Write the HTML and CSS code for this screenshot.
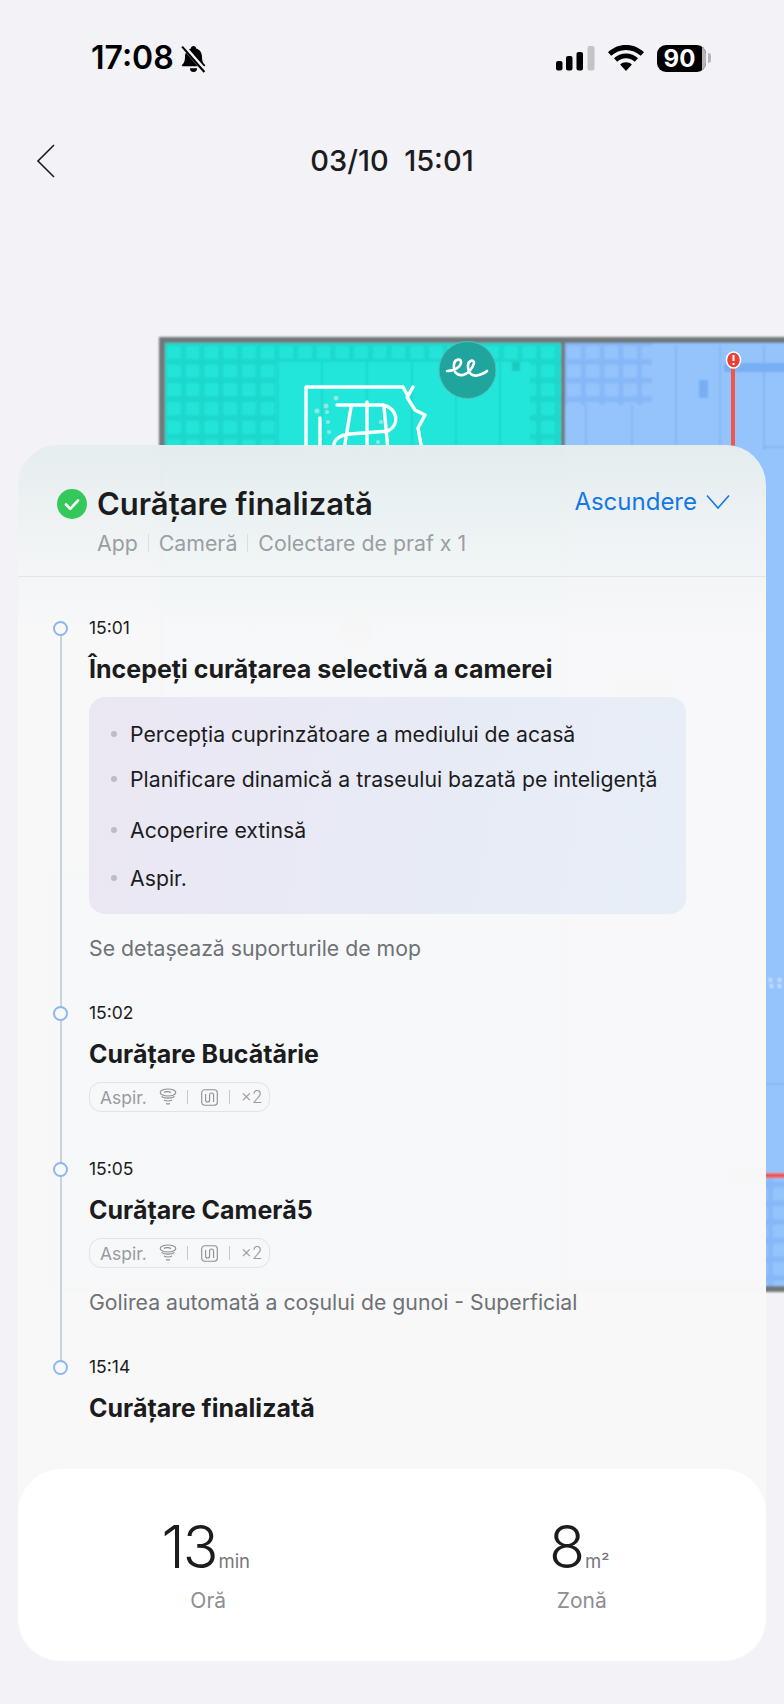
FILE: index.html
```html
<!DOCTYPE html>
<html lang="ro">
<head>
<meta charset="utf-8">
<title>Curățare finalizată</title>
<link rel="stylesheet" href="styles.css">
</head>
<body>
<svg class="map" width="784" height="1704" viewBox="0 0 784 1704" aria-hidden="true">
  <defs>
    <pattern id="cg" x="165" y="343" width="18.7" height="18.7" patternUnits="userSpaceOnUse">
      <rect width="18.7" height="18.7" fill="#1dd8cc"/>
      <rect x="2" y="3" width="14" height="13" rx="1.500" fill="#21e4d8"/>
    </pattern>
    <pattern id="bg" x="565" y="343" width="18.7" height="18.7" patternUnits="userSpaceOnUse">
      <rect width="18.7" height="18.7" fill="#86b8f8"/>
      <rect x="2" y="3" width="14" height="13" rx="1.500" fill="#95c3fc"/>
    </pattern>
    <filter id="soft"><feGaussianBlur stdDeviation="1.300"/></filter>
  </defs>
  <g filter="url(#soft)">
    <rect x="159" y="337" width="640" height="955" fill="#6f7878"/>
    <rect x="50" y="870" width="520" height="422" fill="#6f7878"/>
    <rect x="165" y="343" width="396" height="600" fill="#21e6da"/>
    <rect x="56" y="876" width="505" height="410" fill="#21e6da"/>
    <rect x="565" y="343" width="225" height="943" fill="#95c4fd"/>
    <rect x="165" y="343" width="111" height="110" fill="url(#cg)"/>
    <rect x="276" y="343" width="254" height="19" fill="url(#cg)"/>
    <rect x="530" y="343" width="31" height="110" fill="url(#cg)"/>
    <rect x="565" y="343" width="87" height="62" fill="url(#bg)"/>
    <rect x="565" y="1178" width="225" height="108" fill="url(#bg)"/>
    <path d="M278 362V450M322 362V450M367 362V450M412 362V450M456 362V450M500 362V450" stroke="#1bd2c6" stroke-width="1.500"/>
    <path d="M586 405V450M632 405V450M676 345V450M720 345V450M764 345V450M764 447H790M764 1084H790" stroke="#7fb0ee" stroke-width="1.500" fill="none"/>
    <rect x="724" y="363" width="66" height="9" fill="#78aef2"/>
    <rect x="699" y="380" width="9" height="18" fill="#78aef2"/>
    <rect x="512" y="362" width="8" height="9" fill="#1ac9be"/>
    <rect x="730" y="1173" width="60" height="5" fill="#f0574a"/>
    <path d="M769 980h3M778 980h3M770 986h3M778 986h3" stroke="#d8e9ff" stroke-width="3"/>
    <rect x="615" y="680" width="55" height="40" rx="4" fill="#f5a623"/>
    <circle cx="358" cy="632" r="17" fill="#4a4a4a"/>
  </g>
  <path d="M733 362V450" stroke="#f0574a" stroke-width="4"/>
  <ellipse cx="733.500" cy="360" rx="7" ry="8" fill="#e8413a" stroke="#fff" stroke-width="1.500"/>
  <path d="M733.500 355v6M733.500 363v2" stroke="#fff" stroke-width="2"/>
  <circle cx="467.500" cy="370" r="28.500" fill="#1fa59d" stroke="#56bdb7" stroke-width="1"/>
  <path d="M447 371c7 0 14-4 14-9 0-4-6-3-7 2-1 8 3 12 9 11 5-1 10-7 11-12 0-4-6-3-6 3 0 8 5 11 11 9 3-1 6-2 8-4" fill="none" stroke="#fff" stroke-width="2.600" stroke-linecap="round"/>
  <g fill="none" stroke="#fff" stroke-width="3.400" stroke-linecap="round" stroke-linejoin="round">
    <path d="M306 450V387H403L408 396 413 387 407 397 415 410 425 415 418 428 422 450"/>
    <path d="M320 418V450M337 405H383C398 408 400 425 388 431L350 434C338 435 332 441 334 450M351 407 344 450M367 402V450M384 407 388 450"/>
  </g>
  <g fill="#8fe9e3">
    <circle cx="317" cy="411" r="2.500"/><circle cx="326" cy="406" r="2.500"/><circle cx="336" cy="398" r="2.500"/><circle cx="327" cy="412" r="2"/><circle cx="328" cy="422" r="2"/><circle cx="329" cy="432" r="2"/><circle cx="381" cy="422" r="2"/><circle cx="378" cy="442" r="2"/>
  </g>
</svg>

<div class="screen">
  <header class="status">
    <div class="status-left">
      <span class="clock">17:08</span>
      <svg class="bell" width="29" height="29" viewBox="0 0 28 28" aria-hidden="true">
        <path d="M14 2c1.500 0 2.500 1 2.500 2.300 3.700 1.100 5.700 4.200 5.700 8.200 0 4 1 5.800 2.800 7.500.6.600.2 1.600-.7 1.600H3.700c-.9 0-1.300-1-.7-1.600 1.800-1.700 2.800-3.500 2.800-7.500 0-4 2-7.100 5.700-8.200C11.500 3 12.500 2 14 2Z"/>
        <path d="M10.500 23.500h7a3.500 3.500 0 0 1-7 0Z"/>
        <path d="M4 2 25 26" stroke="#f2f2f7" stroke-width="4.500"/>
        <path d="M3 2.500 24.500 27" stroke="#000" stroke-width="2"/>
      </svg>
    </div>
    <div class="status-right">
      <svg width="39" height="25" viewBox="0 0 39 25" aria-hidden="true">
        <rect x="0" y="15" width="6.500" height="9.500" rx="2"/>
        <rect x="10" y="10" width="6.500" height="14.500" rx="2"/>
        <rect x="20.500" y="6" width="6.500" height="18.500" rx="2"/>
        <rect x="31.500" y="0" width="7" height="24.500" rx="2" fill="#c4c4c6"/>
      </svg>
      <svg width="36" height="26" viewBox="0 0 36 26" aria-hidden="true">
        <path d="M18 0C11 0 5 2.600 0 7.200l3.200 3.600C7.300 7 12.300 4.900 18 4.900s10.700 2.100 14.800 5.900L36 7.200C31 2.600 25 0 18 0Z"/>
        <path d="M18 8.500c-4.700 0-8.800 1.700-12 4.700l3.200 3.600c2.400-2.200 5.400-3.500 8.800-3.500s6.400 1.300 8.800 3.500l3.200-3.600c-3.200-3-7.300-4.700-12-4.700Z"/>
        <path d="M18 17.200c-2.300 0-4.300.8-5.900 2.200L18 26l5.900-6.600c-1.600-1.400-3.600-2.200-5.900-2.200Z"/>
      </svg>
      <div class="battery"><span class="battery-fill">90</span><i class="battery-end"></i></div>
      <i class="battery-knob"></i>
    </div>
  </header>

  <nav class="nav">
    <svg class="back" width="20" height="34" viewBox="0 0 20 34" aria-hidden="true"><path d="M18 1 2 17l16 16" fill="none" stroke="#1c1c1e" stroke-width="1.600"/></svg>
    <h1 class="nav-title">03/10&nbsp; 15:01</h1>
  </nav>

  <section class="sheet">
    <div class="sheet-head">
      <div class="head-main">
        <div class="head-title">
          <svg class="check" width="30" height="30" viewBox="0 0 30 30" aria-hidden="true"><circle cx="15" cy="15" r="15" fill="#34c759"/><path d="M9 15.500l4.300 4.300L21 11.500" fill="none" stroke="#fff" stroke-width="2.600" stroke-linecap="round" stroke-linejoin="round"/></svg>
          <span>Curățare finalizată</span>
        </div>
        <div class="head-sub"><span>App</span><i></i><span>Cameră</span><i></i><span>Colectare de praf x 1</span></div>
      </div>
      <div class="hide">
        <span>Ascundere</span>
        <svg width="24" height="16" viewBox="0 0 24 16" aria-hidden="true"><path d="M1 1.500 12 14 23 1.500" fill="none" stroke="#1677e6" stroke-width="1.600"/></svg>
      </div>
    </div>

    <div class="timeline">
      <i class="rail"></i>

      <article class="event">
        <i class="dot"></i>
        <time class="time">15:01</time>
        <h2 class="event-title">Începeți curățarea selectivă a camerei</h2>
        <ul class="steps">
          <li>Percepția cuprinzătoare a mediului de acasă</li>
          <li>Planificare dinamică a traseului bazată pe inteligență</li>
          <li>Acoperire extinsă</li>
          <li>Aspir.</li>
        </ul>
        <p class="note">Se detașează suporturile de mop</p>
      </article>

      <article class="event">
        <i class="dot"></i>
        <time class="time">15:02</time>
        <h2 class="event-title">Curățare Bucătărie</h2>
        <div class="chip">
          <span>Aspir.</span>
          <svg class="chip-fan" width="18" height="18" viewBox="0 0 18 18" aria-hidden="true"><ellipse cx="9" cy="4.500" rx="7.800" ry="3.500"/><path d="M5 4.500c1-1 5-1.300 7 0M2.500 8.500c3 2.200 10 2.200 13 0M5 12c2 1.300 6 1.300 8 0M7 15.500c1.200.6 2.800.6 4 0"/></svg>
          <i class="sep"></i>
          <svg class="chip-mop" width="17" height="17" viewBox="0 0 17 17" aria-hidden="true"><rect x=".7" y=".7" width="15.600" height="15.600" rx="3"/><path d="M4.600 5v6a2 2 0 0 0 4 0V6a2 2 0 0 1 4 0v7"/></svg>
          <i class="sep"></i>
          <span class="chip-count">×2</span>
        </div>
      </article>

      <article class="event">
        <i class="dot"></i>
        <time class="time">15:05</time>
        <h2 class="event-title">Curățare Cameră5</h2>
        <div class="chip">
          <span>Aspir.</span>
          <svg class="chip-fan" width="18" height="18" viewBox="0 0 18 18" aria-hidden="true"><ellipse cx="9" cy="4.500" rx="7.800" ry="3.500"/><path d="M5 4.500c1-1 5-1.300 7 0M2.500 8.500c3 2.200 10 2.200 13 0M5 12c2 1.300 6 1.300 8 0M7 15.500c1.200.6 2.800.6 4 0"/></svg>
          <i class="sep"></i>
          <svg class="chip-mop" width="17" height="17" viewBox="0 0 17 17" aria-hidden="true"><rect x=".7" y=".7" width="15.600" height="15.600" rx="3"/><path d="M4.600 5v6a2 2 0 0 0 4 0V6a2 2 0 0 1 4 0v7"/></svg>
          <i class="sep"></i>
          <span class="chip-count">×2</span>
        </div>
        <p class="note">Golirea automată a coșului de gunoi - Superficial</p>
      </article>

      <article class="event">
        <i class="dot"></i>
        <time class="time">15:14</time>
        <h2 class="event-title">Curățare finalizată</h2>
      </article>
    </div>

    <div class="stats">
      <div class="stat">
        <div class="stat-value"><b>13</b><span>min</span></div>
        <div class="stat-label">Oră</div>
      </div>
      <div class="stat">
        <div class="stat-value"><b>8</b><span>m²</span></div>
        <div class="stat-label">Zonă</div>
      </div>
    </div>
  </section>
</div>
</body>
</html>
```
FILE: styles.css
```css
* { box-sizing: border-box; }
html, body { margin: 0; padding: 0; }
body {
  width: 784px;
  height: 1704px;
  overflow: hidden;
  position: relative;
  background: #f2f2f7;
  font-family: Inter, "Noto Sans", "Liberation Sans", sans-serif;
  color: #1c1c1e;
}
i { display: block; font-style: normal; }

.map { position: absolute; left: 0; top: 0; }
.screen { position: relative; width: 784px; }

/* status bar */
.status {
  height: 116px;
  padding: 44px 73px 0 91px;
  display: flex;
  justify-content: space-between;
  align-items: flex-start;
}
.status-left { display: flex; align-items: center; gap: 5px; height: 28px; }
.clock { font-size: 32px; line-height: 28px; font-weight: 600; color: #000; }
.bell { fill: #000; margin-top: 1px; }
.status-right { display: flex; align-items: center; height: 28px; gap: 13px; }
.status-right svg { fill: #000; }
.battery {
  width: 49px;
  height: 27px;
  border-radius: 9px;
  background: #000;
  display: flex;
  overflow: hidden;
}
.battery-fill {
  flex: 1;
  color: #fff;
  font-size: 24px;
  font-weight: 700;
  line-height: 27px;
  text-align: center;
}
.battery-end { width: 4px; background: #b6b6b8; }
.battery-knob { width: 3px; height: 10px; margin-left: -11px; border-radius: 0 3px 3px 0; background: #b6b6b8; }

/* nav */
.nav { height: 92px; padding-bottom: 2px; position: relative; display: flex; align-items: center; justify-content: center; }
.back { position: absolute; left: 36px; top: 28px; }
.nav-title { margin: 0; font-size: 29px; line-height: 34px; font-weight: 500; color: #1c1c1e; }

/* sheet */
.sheet {
  margin: 237px 18px 0;
  width: 748px;
  height: 1216px;
  border-radius: 40px;
  background: linear-gradient(180deg, rgba(229,237,238,.99) 0, rgba(241,244,245,.99) 100px, rgba(248,248,249,.992) 190px);
  display: flex;
  flex-direction: column;
}
.sheet-head {
  height: 132px;
  padding: 39px 36px 0 39px;
  display: flex;
  justify-content: space-between;
  align-items: flex-start;
  border-bottom: 1px solid #e2e5e7;
  flex: none;
}
.head-title { display: flex; align-items: center; gap: 10px; font-size: 31px; line-height: 40px; font-weight: 600; color: #1c1c1e; }
.check { flex: none; }
.head-sub { display: flex; align-items: center; gap: 10px; margin-left: 40px; margin-top: -1px; font-size: 21.300px; line-height: 40px; color: #9a9ea3; }
.head-sub i { width: 1px; height: 18px; background: #dcdfe1; }
.hide { display: flex; align-items: center; gap: 9px; font-size: 24px; line-height: 36px; color: #1677e6; }

/* timeline */
.timeline { position: relative; flex: 1; padding: 39px 0 0 71px; }
.rail { position: absolute; left: 42px; top: 51px; width: 1.500px; height: 739px; background: #c9d2de; }
.event { position: relative; margin-bottom: 39px; display: flow-root; }
.dot {
  position: absolute;
  left: -36px;
  top: 5px;
  width: 15px;
  height: 15px;
  border-radius: 50%;
  background: #f7f8fa;
  border: 2px solid #8db7ee;
}
.time { display: block; font-size: 17.500px; line-height: 24px; color: #1c1c1e; }
.event-title { margin: 13px 0 0; font-size: 25px; line-height: 32px; font-weight: 700; color: #1c1c1e; }
.steps {
  margin: 12px 0 0;
  padding: 22px 0 21px 41px;
  width: 597px;
  height: 217px;
  list-style: none;
  border-radius: 16px;
  background: linear-gradient(100deg, #ebe7f3 0, #e7ebf6 60%, #e8eef8 100%);
  font-size: 21.250px;
  line-height: 30px;
  color: #1c1c1e;
}
.steps li { position: relative; white-space: nowrap; }
.steps li::before {
  content: "";
  position: absolute;
  left: -19px;
  top: 12px;
  width: 6px;
  height: 6px;
  border-radius: 50%;
  background: #bcbcc4;
}
.steps li:nth-child(2) { margin-top: 15px; }
.steps li:nth-child(3) { margin-top: 21px; }
.steps li:nth-child(4) { margin-top: 18px; }
.note { margin: 20px 0 0; font-size: 21.250px; line-height: 28px; color: #6e7175; }
.chip {
  margin: 12px 0 6px;
  width: 181px;
  height: 30px;
  padding: 0 0 0 10px;
  display: flex;
  align-items: center;
  border: 1.500px solid #e3e3e5;
  border-radius: 12px;
  font-size: 17.500px;
  color: #9a9a9e;
}
.chip > * { flex: none; }
.chip svg { fill: none; stroke: #8e8e93; stroke-width: 1.100; }
.chip-fan { margin-left: 12px; }
.chip-mop { margin: 0 11px 0 13px; }
.sep { width: 1px; height: 14px; background: #c8c8cc; }
.chip-fan + .sep { margin-left: 10px; }
.chip-mop + .sep { margin-right: 11px; }
.chip-count { font-size: 17px; font-weight: 300; }

/* stats */
.stats {
  flex: none;
  height: 192px;
  border-radius: 44px;
  background: #fff;
  display: grid;
  grid-template-columns: 1fr 1fr;
  padding: 46px 0 0 1px;
}
.stat { display: flex; flex-direction: column; align-items: center; }
.stat-value { display: flex; align-items: baseline; gap: 2px; height: 64px; line-height: 64px; }
.stat-value b { font-size: 59px; font-weight: 300; color: #1c1c1e; letter-spacing: -2px; }
.stat-value span { font-size: 18.500px; color: #77777c; }
.stat-label { margin: 9px 0 0 5px; font-size: 21px; line-height: 26px; color: #8e8e93; }
```
